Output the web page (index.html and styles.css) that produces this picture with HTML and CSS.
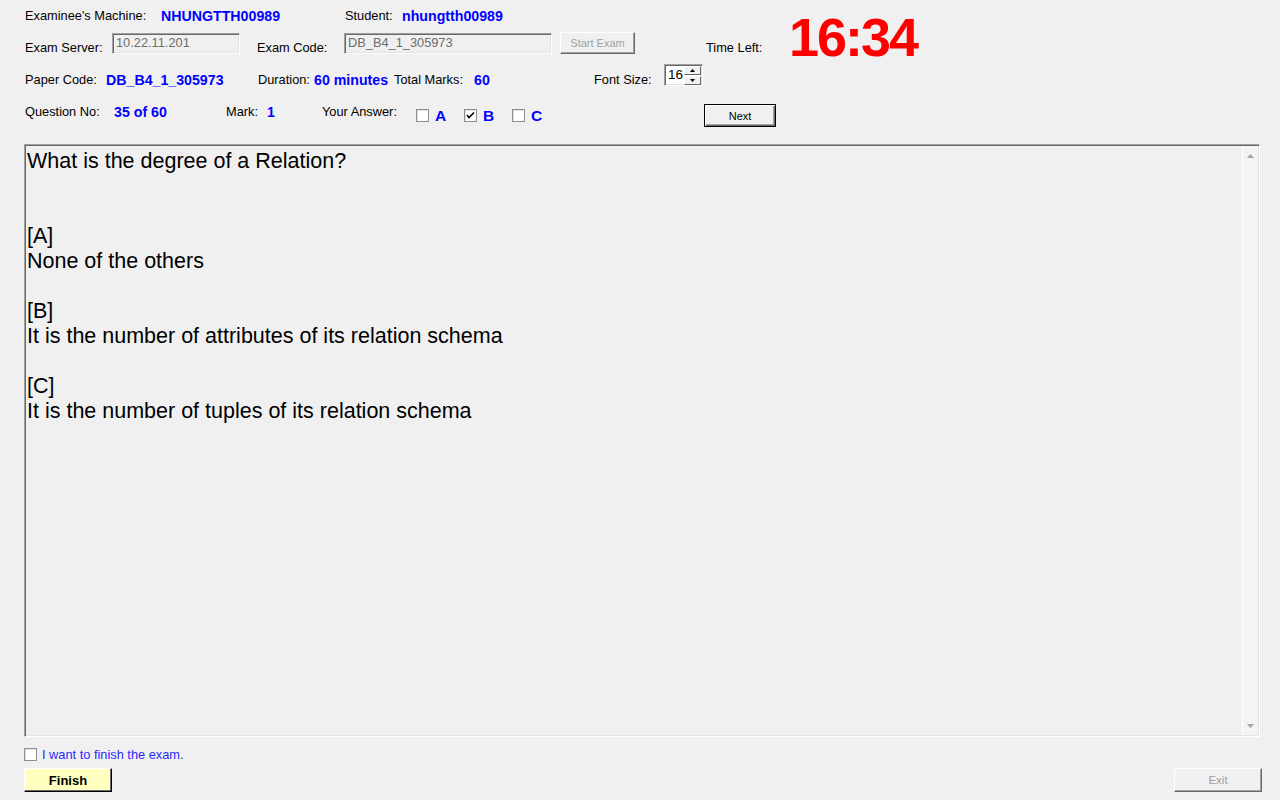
FILE: index.html
```html
<!DOCTYPE html>
<html lang="en">
<head>
<meta charset="utf-8">
<title>Exam Client</title>
<link rel="stylesheet" href="styles.css">
</head>
<body>
<div class="page">
  <div class="header">
    <div class="row r1">
      <span class="lbl w-machine">Examinee's Machine:</span>
      <span class="val w-machine-val">NHUNGTTH00989</span>
      <span class="lbl w-student">Student:</span>
      <span class="val">nhungtth00989</span>
    </div>
    <div class="row r2">
      <span class="lbl w-server">Exam Server:</span>
      <div class="textbox w-server-box">10.22.11.201</div>
      <span class="lbl w-code">Exam Code:</span>
      <div class="textbox w-code-box">DB_B4_1_305973</div>
      <button class="btn btn-disabled btn-start">Start Exam</button>
      <span class="lbl w-timeleft">Time Left:</span>
      <span class="timer">16:34</span>
    </div>
    <div class="row r3">
      <span class="lbl w-paper">Paper Code:</span>
      <span class="val w-paper-val">DB_B4_1_305973</span>
      <span class="lbl w-duration">Duration:</span>
      <span class="val w-duration-val">60 minutes</span>
      <span class="lbl w-total">Total Marks:</span>
      <span class="val w-total-val">60</span>
      <span class="lbl w-font">Font Size:</span>
      <div class="spin">
        <span class="spin-text">16</span>
        <div class="spin-btns">
          <span class="spin-btn"><svg width="5" height="3" viewBox="0 0 5 3"><polygon points="2.5,0 5,3 0,3" fill="#000"/></svg></span>
          <span class="spin-btn"><svg width="5" height="3" viewBox="0 0 5 3"><polygon points="0,0 5,0 2.5,3" fill="#000"/></svg></span>
        </div>
      </div>
    </div>
    <div class="row r4">
      <span class="lbl w-qno">Question No:</span>
      <span class="val w-qno-val">35 of 60</span>
      <span class="lbl w-mark">Mark:</span>
      <span class="val w-mark-val">1</span>
      <span class="lbl w-answer">Your Answer:</span>
      <label class="opt"><span class="cb"></span><span class="opt-letter">A</span></label>
      <label class="opt"><span class="cb"><svg width="11" height="11" viewBox="0 0 11 11"><polyline points="2,5 4,7.5 9,2.5" fill="none" stroke="#000" stroke-width="1.6"/></svg></span><span class="opt-letter">B</span></label>
      <label class="opt"><span class="cb"></span><span class="opt-letter">C</span></label>
      <button class="btn btn-default btn-next">Next</button>
    </div>
  </div>

  <div class="qbox">
    <div class="qtext">
      <p>What is the degree of a Relation?</p>
      <p>&nbsp;</p>
      <p>&nbsp;</p>
      <p>[A]</p>
      <p>None of the others</p>
      <p>&nbsp;</p>
      <p>[B]</p>
      <p>It is the number of attributes of its relation schema</p>
      <p>&nbsp;</p>
      <p>[C]</p>
      <p>It is the number of tuples of its relation schema</p>
    </div>
    <div class="scrollbar">
      <svg width="7" height="4" viewBox="0 0 7 4"><polygon points="3.5,0 7,4 0,4" fill="#a3a3a3"/></svg>
      <svg width="7" height="4" viewBox="0 0 7 4"><polygon points="0,0 7,0 3.5,4" fill="#a3a3a3"/></svg>
    </div>
  </div>

  <label class="finish-check"><span class="cb"></span><span class="finish-label">I want to finish the exam.</span></label>

  <div class="actions">
    <button class="btn btn-finish">Finish</button>
    <button class="btn btn-disabled btn-exit">Exit</button>
  </div>
</div>
</body>
</html>
```

FILE: styles.css
```css
html, body {
  margin: 0;
  padding: 0;
}
body {
  background: #f0f0f0;
  font-family: "Liberation Sans", Arial, sans-serif;
  font-size: 12.8px;
  color: #000;
  overflow: hidden;
}
.page {
  box-sizing: border-box;
  width: 1280px;
  height: 800px;
  padding: 8px 18px 0 24px;
  display: flex;
  flex-direction: column;
}
.header {
  display: flex;
  flex-direction: column;
  padding-left: 1px;
}
.row {
  display: flex;
  align-items: flex-start;
  flex: none;
}
.r1 { height: 16px; }
.r2 { height: 24px; margin-top: 8px; }
.r3 { height: 24px; margin-top: 8px; }
.r4 { height: 23px; margin-top: 16px; }

.lbl, .val {
  flex: none;
  line-height: 16px;
  white-space: nowrap;
}
.val {
  font-weight: bold;
  font-size: 14.2px;
  color: #0000ff;
}
.r2 .lbl { margin-top: 8px; }
.r3 .lbl, .r3 .val { margin-top: 8px; }

/* column widths */
.w-machine { width: 136px; }
.w-machine-val { width: 184px; }
.w-student { width: 57px; }
.w-server { width: 87px; }
.w-server-box { width: 128px; }
.w-code { width: 87px; margin-left: 17px; }
.w-code-box { width: 208px; }
.w-timeleft { width: 83px; margin-left: 71px; }
.w-paper { width: 81px; }
.w-paper-val { width: 152px; }
.w-duration { width: 56px; }
.w-duration-val { width: 80px; }
.w-total { width: 80px; }
.w-total-val { width: 120px; }
.w-font { width: 70px; }
.w-qno { width: 89px; }
.w-qno-val { width: 112px; }
.w-mark { width: 41px; }
.w-mark-val { width: 55px; }
.w-answer { width: 94px; }

/* disabled text box */
.textbox {
  flex: none;
  box-sizing: border-box;
  height: 21px;
  margin-top: 1px;
  padding: 1px 0 0 3px;
  border: 1px solid;
  border-color: #a0a0a0 #ffffff #ffffff #a0a0a0;
  box-shadow: inset 1px 1px #696969, inset -1px -1px #e3e3e3;
  background: #f0f0f0;
  color: #6d6d6d;
  line-height: 16px;
  white-space: nowrap;
}

/* buttons */
.btn {
  flex: none;
  box-sizing: border-box;
  margin: 0;
  padding: 0;
  font-family: "Liberation Sans", Arial, sans-serif;
  font-size: 11px;
  color: #000;
  background: #f0f0f0;
  border: 1px solid;
  border-color: #ffffff #696969 #696969 #ffffff;
  box-shadow: inset -1px -1px #a0a0a0, inset 1px 1px #f0f0f0;
}
.btn-disabled {
  color: #a0a0a0;
}
.btn-start {
  width: 75px;
  height: 22px;
  margin-left: 8px;
}
.btn-default {
  border-color: #000;
  box-shadow: inset 1px 1px #ffffff, inset -1px -1px #696969, inset -2px -2px #a0a0a0;
}
.btn-next {
  width: 72px;
  height: 23px;
  margin-left: 144px;
}
.btn-finish {
  width: 88px;
  height: 24px;
  background: #ffffc0;
  border-color: #ffffff #000000 #000000 #ffffff;
  box-shadow: inset -1px -1px #696969;
  font-size: 13px;
  font-weight: bold;
}
.btn-exit {
  width: 88px;
  height: 24px;
  margin-left: auto;
  font-size: 11.5px;
}

/* timer */
.timer {
  flex: none;
  font-size: 54px;
  line-height: 54px;
  font-weight: bold;
  color: #ff0000;
  margin-top: -22px;
  letter-spacing: -2px;
}

/* numeric up-down */
.spin {
  flex: none;
  box-sizing: border-box;
  width: 39px;
  height: 22px;
  border: 1px solid;
  border-color: #a0a0a0 #ffffff #ffffff #a0a0a0;
  box-shadow: inset 1px 1px #696969, inset -1px -1px #e3e3e3;
  background: #ffffff;
  display: flex;
  align-items: flex-start;
}
.spin-text {
  flex: 1;
  padding: 2px 0 0 3px;
  line-height: 15px;
  font-size: 13.5px;
}
.spin-btns {
  display: flex;
  flex-direction: column;
  gap: 1px;
  margin: 1px 1px 0 0;
}
.spin-btn {
  box-sizing: border-box;
  width: 17px;
  height: 9px;
  background: #f0f0f0;
  border: 1px solid;
  border-color: #ffffff #696969 #696969 #ffffff;
  display: flex;
  align-items: center;
  justify-content: center;
}
.spin-btn svg { display: block; }

/* answer options */
.opt {
  flex: none;
  width: 48px;
  display: flex;
  align-items: flex-start;
}
.cb {
  flex: none;
  box-sizing: border-box;
  width: 13px;
  height: 13px;
  border: 1px solid #8e8f8f;
  background: #ffffff;
  box-shadow: inset 1px 1px #e2e2e2;
  display: flex;
  align-items: center;
  justify-content: center;
}
.cb svg { display: block; }
.opt .cb { margin-top: 5px; }
.opt-letter {
  margin: 4px 0 0 6px;
  font-size: 15.5px;
  line-height: 16px;
  font-weight: bold;
  color: #0000ff;
}

/* question area */
.qbox {
  flex: none;
  box-sizing: border-box;
  width: 1236px;
  height: 593px;
  margin-top: 17px;
  border: 1px solid;
  border-color: #a0a0a0 #ffffff #ffffff #a0a0a0;
  box-shadow: inset 1px 1px #696969, inset -1px -1px #e3e3e3;
  display: flex;
}
.qtext {
  flex: 1;
  padding: 4px 0 0 2px;
  font-size: 21.5px;
  line-height: 25px;
}
.qtext p {
  margin: 0;
  white-space: nowrap;
}
.scrollbar {
  flex: none;
  width: 16px;
  margin: 1px 1px 1px 0;
  box-sizing: border-box;
  border-left: 1px solid #ffffff;
  background: #f4f4f4;
  display: flex;
  flex-direction: column;
  align-items: center;
  justify-content: space-between;
  padding: 8px 0 7px;
}
.scrollbar svg { display: block; }

/* bottom */
.finish-check {
  flex: none;
  display: flex;
  align-items: center;
  height: 13px;
  margin-top: 11px;
}
.finish-label {
  margin-left: 5px;
  line-height: 13px;
  color: #2a2aff;
}
.actions {
  flex: none;
  display: flex;
  margin-top: 7px;
}
```
